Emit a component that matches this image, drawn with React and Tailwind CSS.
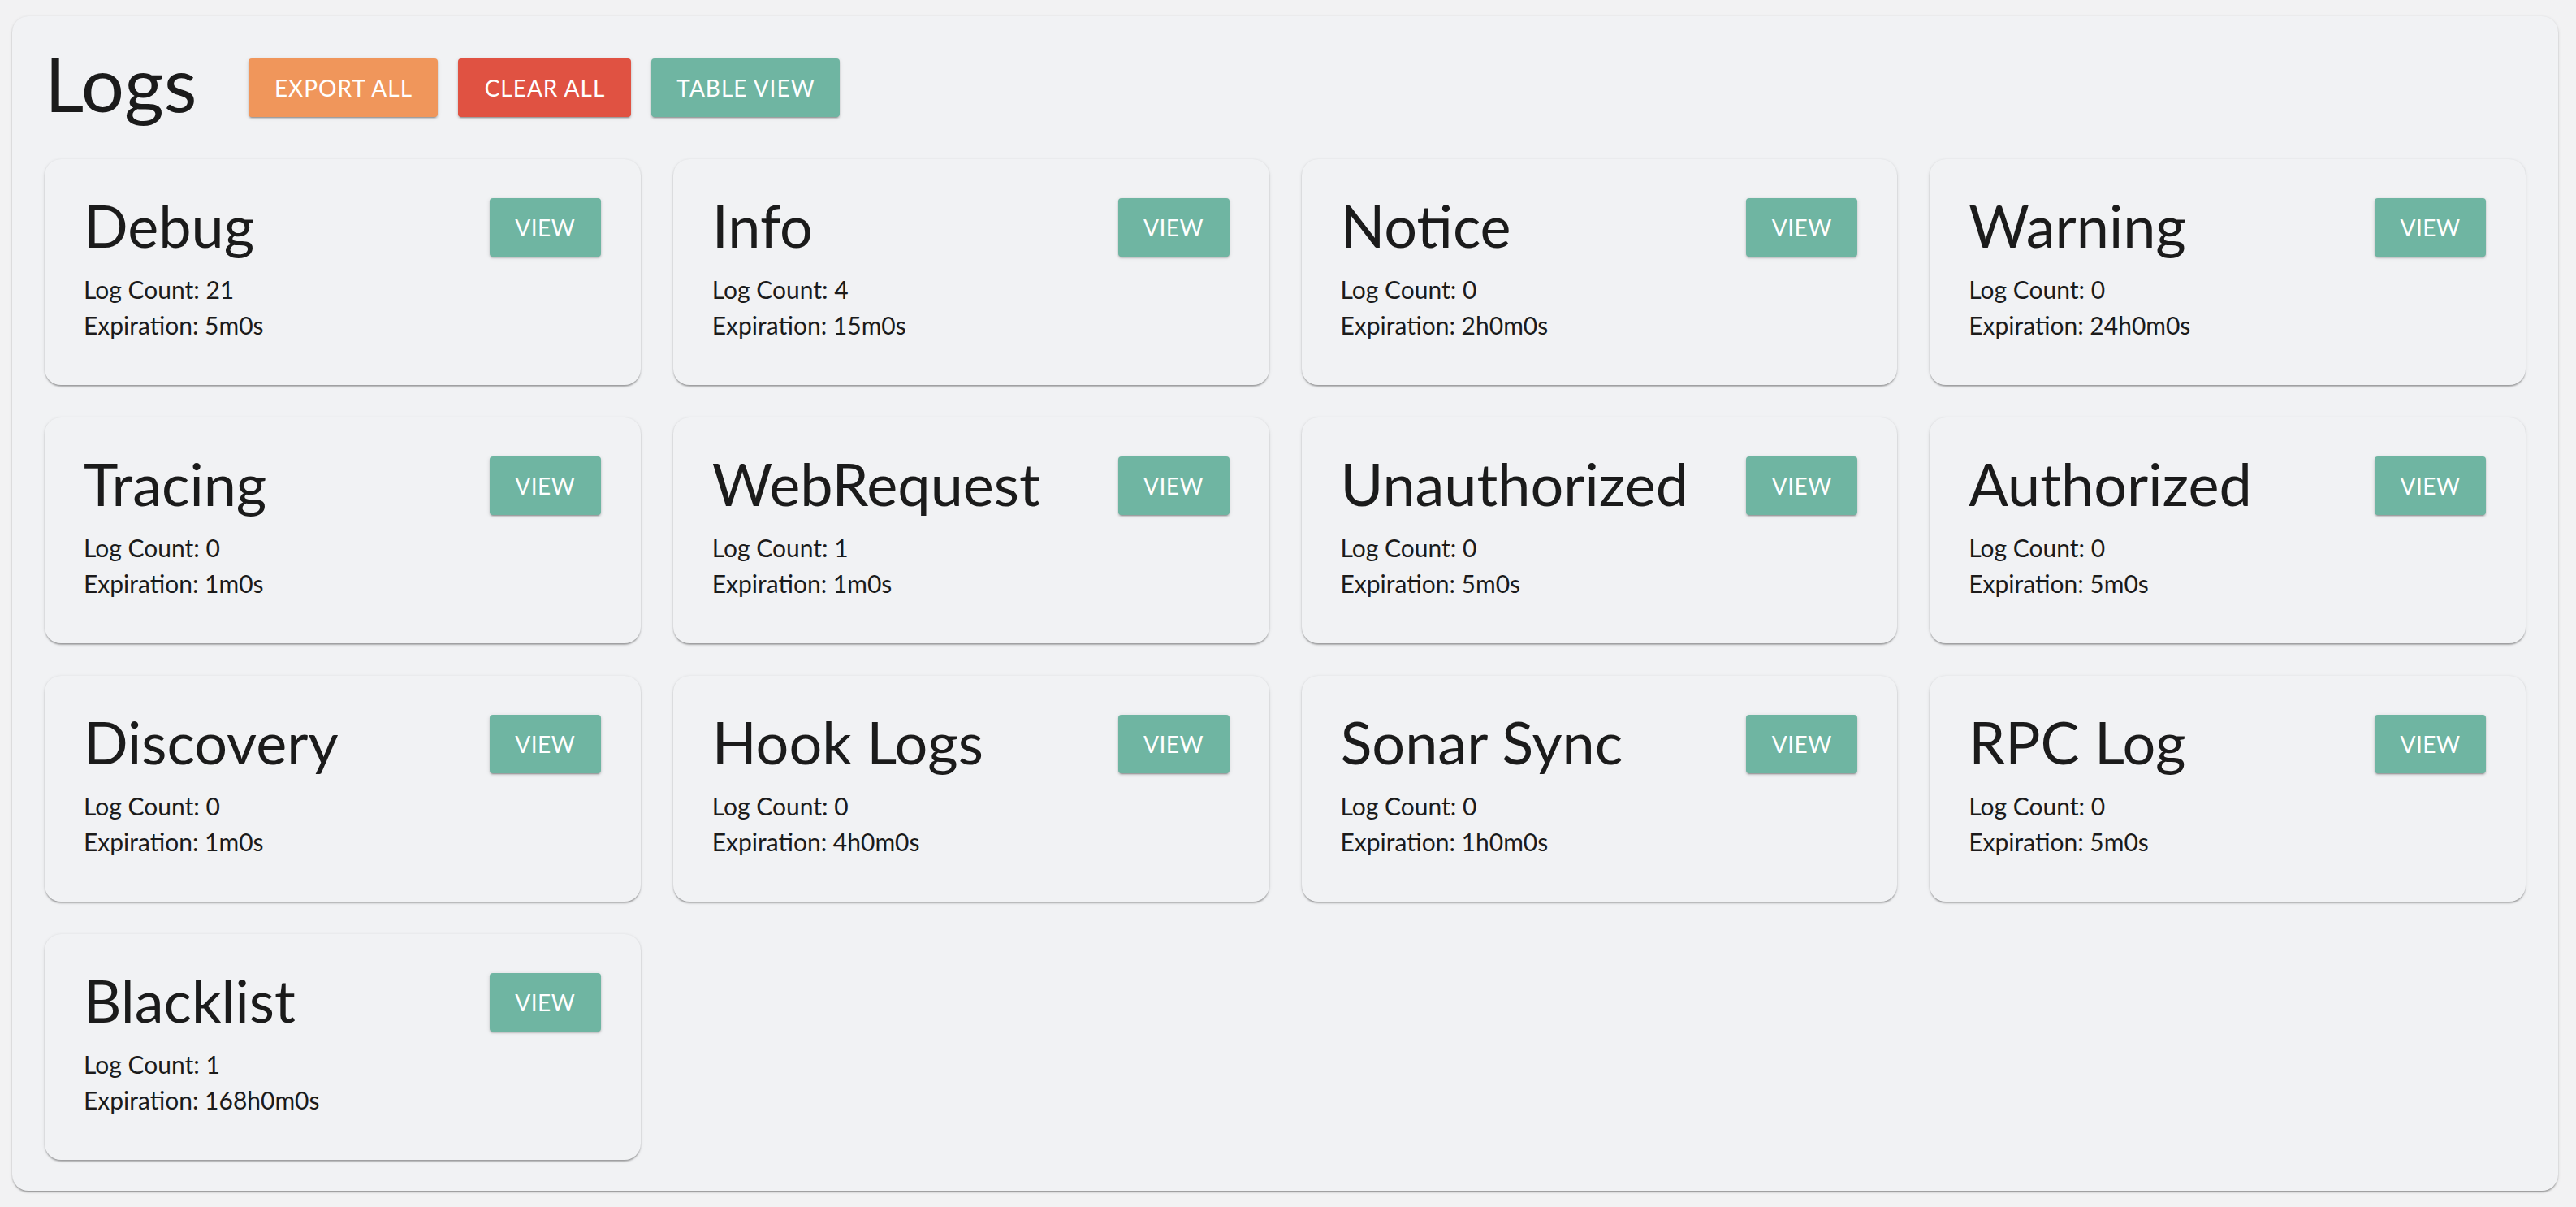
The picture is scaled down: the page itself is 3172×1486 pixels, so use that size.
import React from "react";

const logs = [
  ["Debug", "21", "5m0s"],
  ["Info", "4", "15m0s"],
  ["Notice", "0", "2h0m0s"],
  ["Warning", "0", "24h0m0s"],
  ["Tracing", "0", "1m0s"],
  ["WebRequest", "1", "1m0s"],
  ["Unauthorized", "0", "5m0s"],
  ["Authorized", "0", "5m0s"],
  ["Discovery", "0", "1m0s"],
  ["Hook Logs", "0", "4h0m0s"],
  ["Sonar Sync", "0", "1h0m0s"],
  ["RPC Log", "0", "5m0s"],
  ["Blacklist", "1", "168h0m0s"],
];

const btnShadow =
  "shadow-[0_3px_1px_-2px_rgba(0,0,0,0.2),0_2px_2px_0_rgba(0,0,0,0.14),0_1px_5px_0_rgba(0,0,0,0.12)]";

const cardShadow =
  "shadow-[0_3px_2px_-1px_rgba(0,0,0,0.22),0_1px_2px_0_rgba(0,0,0,0.14),0_1px_4px_0_rgba(0,0,0,0.1)]";

function Card({ name, count, exp }) {
  return (
    <div className={`flex justify-between rounded-[20px] bg-[#f1f2f4] h-[278px] pl-[48px] pr-[49px] pt-[48px] ${cardShadow}`}>
      <div className="flex flex-col">
        <div className="text-[72px] leading-none mt-[-3px] text-[#1b1b1b]">{name}</div>
        <div className="mt-[21px] text-[30px] leading-[44px] text-[#1b1b1b]">
          <div>Log Count: {count}</div>
          <div>Expiration: {exp}</div>
        </div>
      </div>
      <button
        className={`w-[137px] h-[72px] rounded-[4px] bg-[#6fb5a2] text-white text-[28px] tracking-[0.5px] uppercase ${btnShadow}`}
      >
        View
      </button>
    </div>
  );
}

export default function App() {
  return (
    <div
      className="min-h-screen bg-[#f2f2f3] pl-[15px] pr-[22px] pt-[20px] pb-[21px]"
      style={{ fontFamily: "Lato, 'Open Sans', sans-serif" }}
    >
      <div className={`rounded-[20px] bg-[#f1f2f4] px-[40px] pt-[52px] pb-[38px] ${cardShadow}`}>
        <div className="flex items-center h-[72px]">
          <h1 className="text-[94px] leading-none text-[#1b1b1b] mb-[12px] mr-[64px]">Logs</h1>
          <div className="flex gap-[25px]">
            <button className={`w-[233px] h-[72px] rounded-[4px] bg-[#f0965b] text-white text-[28px] tracking-[1px] ${btnShadow}`}>
              EXPORT ALL
            </button>
            <button className={`w-[213px] h-[72px] rounded-[4px] bg-[#e05242] text-white text-[28px] tracking-[1px] ${btnShadow}`}>
              CLEAR ALL
            </button>
            <button className={`w-[232px] h-[72px] rounded-[4px] bg-[#6fb5a2] text-white text-[28px] tracking-[1px] ${btnShadow}`}>
              TABLE VIEW
            </button>
          </div>
        </div>
        <div className="grid grid-cols-4 gap-[40px] mt-[52px]">
          {logs.map(([n, c, e]) => (
            <Card key={n} name={n} count={c} exp={e} />
          ))}
        </div>
      </div>
    </div>
  );
}
